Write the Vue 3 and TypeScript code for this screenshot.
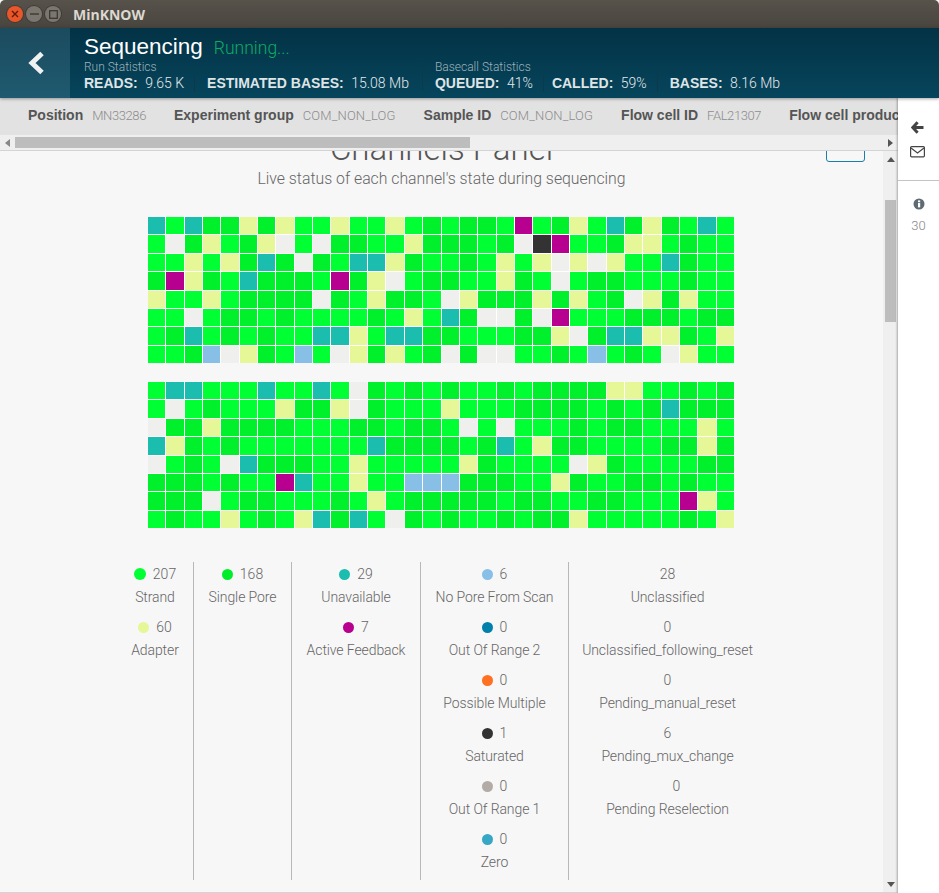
<script setup lang="ts">
const block1: string[] = [
  'TGTDDYDYGGYGGYGDGDDGMGDYGTDYDGTG',
  'GWDYGDYWGWDDGGYDDDGDWKMGGDYYGDGG',
  'GGYGYDTDWDGTTYDGGDGYGYWYWYGGTDGG',
  'DMYDGTDDDGMDYWGDDGGYDGWGDDGGGDGG',
  'YGGYGDDDDWDGYDDGWYDDDYDYGDWYDYGG',
  'GGWGDDGDGGGGDGYGTDWWDWMGGGDDDGDD',
  'GDTGDGDGGTTYGTTDDGGGDDYWDTTYYDGY',
  'GGDBWYDGBGWYDYGDWDWWGGDGBGDGWYGG',
]
const block2: string[] = [
  'GTTGGGTGGTGWDGDGDGGDGDDDDYYGGDGD',
  'GWGDGGGYDDYWDGGGYGGGDDDDGDGDTDDD',
  'WDDYDDDDGGGDDGDDGWGWGGGDGDDGGGYG',
  'TYDGDGGGGGGGTDDDDGDTGYDDGGGGDDYD',
  'WGDGWTDDDGGYGGGGGYDGGGGWYDGGGGDD',
  'DDDGDGGMTGGYGGBBBDDDGGYDGGDDGDGG',
  'DDDWGDDGGGDGYGDDDDDGDDGGDDGGGMYG',
  'GDGGYGDGYTDTGWDGDGGDGDDYGGGGGDGY',
]
const blocks = [block1, block2].map(rows => rows.flatMap(r => r.split('')))

interface Stat { dot?: string; n: string; label: string; shift?: boolean }
const columns: Stat[][] = [
  [
    { dot: '#00ff33', n: '207', label: 'Strand' },
    { dot: '#e5f796', n: '60', label: 'Adapter' },
  ],
  [{ dot: '#00ee2a', n: '168', label: 'Single Pore' }],
  [
    { dot: '#1bbdaf', n: '29', label: 'Unavailable' },
    { dot: '#b80090', n: '7', label: 'Active Feedback' },
  ],
  [
    { dot: '#88bfe6', n: '6', label: 'No Pore From Scan' },
    { dot: '#0080ab', n: '0', label: 'Out Of Range 2' },
    { dot: '#ff7020', n: '0', label: 'Possible Multiple' },
    { dot: '#333333', n: '1', label: 'Saturated' },
    { dot: '#b3aca6', n: '0', label: 'Out Of Range 1' },
    { dot: '#36a7c4', n: '0', label: 'Zero' },
  ],
  [
    { n: '28', label: 'Unclassified' },
    { n: '0', label: 'Unclassified_following_reset' },
    { n: '0', label: 'Pending_manual_reset' },
    { n: '6', label: 'Pending_mux_change' },
    { n: '0', label: 'Pending Reselection', shift: true },
  ],
]
</script>

<template>
  <div class="window">
    <div class="titlebar">
      <span class="wbtn close"><svg width="8" height="8" viewBox="0 0 8 8"><path d="M1 1 L7 7 M7 1 L1 7" stroke="#5e1c08" stroke-width="1.4"/></svg></span>
      <span class="wbtn"><svg width="9" height="8" viewBox="0 0 9 8"><path d="M0 4 H9" stroke="#3b3934" stroke-width="1.4"/></svg></span>
      <span class="wbtn"><svg width="9" height="9" viewBox="0 0 9 9"><rect x=".7" y=".7" width="7.6" height="7.6" fill="none" stroke="#3b3934" stroke-width="1.3"/></svg></span>
      <span class="wtitle">MinKNOW</span>
    </div>
    <header class="header">
      <div class="back">
        <svg width="22" height="26" viewBox="0 0 22 26"><path d="M18 3.5 L8 13 L18 22.5" fill="none" stroke="#f0f2f2" stroke-width="5"/></svg>
      </div>
      <div class="head-main">
        <div class="head-title"><span class="seq">Sequencing</span><span class="running">Running...</span></div>
        <div class="head-stats">
          <div class="group">
            <div class="group-name">Run Statistics</div>
            <div class="group-row">
              <span class="hs"><b>READS:</b>9.65 K</span>
              <i class="sep"></i>
              <span class="hs"><b>ESTIMATED BASES:</b>15.08 Mb</span>
            </div>
          </div>
          <i class="sep tall"></i>
          <div class="group">
            <div class="group-name">Basecall Statistics</div>
            <div class="group-row">
              <span class="hs"><b>QUEUED:</b>41%</span>
              <i class="sep narrow"></i>
              <span class="hs"><b>CALLED:</b>59%</span>
              <i class="sep"></i>
              <span class="hs"><b>BASES:</b>8.16 Mb</span>
            </div>
          </div>
        </div>
      </div>
    </header>
    <div class="body">
      <div class="left">
        <div class="infobar">
          <span class="inf tight"><b>Position</b>MN33286</span>
          <span class="inf wide"><b>Experiment group</b>COM_NON_LOG</span>
          <span class="inf wide"><b>Sample ID</b>COM_NON_LOG</span>
          <span class="inf tight"><b>Flow cell ID</b>FAL21307</span>
          <span class="inf"><b>Flow cell product</b></span>
        </div>
        <div class="hscroll">
          <span class="arr al"></span>
          <div class="htrack"><div class="hthumb"></div></div>
          <span class="arr ar"></span>
        </div>
        <div class="mainwrap">
          <main class="main">
            <div class="panel-head">
              <h1>Channels Panel</h1>
              <span class="outline-btn"></span>
            </div>
            <p class="sub">Live status of each channel's state during sequencing</p>
            <div class="grid" v-for="(cells, b) in blocks" :key="b">
              <i v-for="(c, idx) in cells" :key="idx" :class="['cell', c]"></i>
            </div>
            <div class="legend">
              <div class="lcol" v-for="(col, ci) in columns" :key="ci">
                <div class="stat" v-for="s in col" :key="s.label">
                  <div :class="['num', { shifted: s.shift }]"><i v-if="s.dot" class="dot" :style="{ background: s.dot }"></i>{{ s.n }}</div>
                  <div class="lab">{{ s.label }}</div>
                </div>
              </div>
            </div>
          </main>
          <div class="vscroll">
            <span class="arr au"></span>
            <div class="vtrack"><div class="vthumb"></div></div>
            <span class="arr ad"></span>
          </div>
        </div>
      </div>
      <aside class="side">
        <div class="side-top">
          <svg width="13" height="13" viewBox="0 0 13 13"><path d="M6.6 1.3 L1.8 6.5 L6.6 11.7 M2.5 6.5 H12.5" fill="none" stroke="#444" stroke-width="2.9"/></svg>
          <svg width="15" height="12" viewBox="0 0 15 12"><rect x=".6" y=".6" width="13.8" height="10.2" rx="1" fill="none" stroke="#444" stroke-width="1.2"/><path d="M1 2 L7.5 7 L14 2" fill="none" stroke="#444" stroke-width="1.2"/></svg>
        </div>
        <div class="side-bottom">
          <svg width="12" height="12" viewBox="0 0 12 12"><circle cx="6" cy="6" r="5.5" fill="#5f6b72"/><rect x="5" y="5" width="2.2" height="4.4" fill="#fff"/><rect x="5" y="2.4" width="2.2" height="1.8" fill="#fff"/></svg>
          <span class="count">30</span>
        </div>
      </aside>
    </div>
  </div>
</template>

<style>
html, body { margin: 0; background: #f7f7f7; }
</style>

<style scoped>
.window { width: 939px; height: 893px; display: flex; flex-direction: column; overflow: hidden; font-family: "Roboto", "Liberation Sans", sans-serif; background: #f7f7f7; }
.titlebar { height: 28px; flex: none; display: flex; align-items: center; padding-left: 7px; gap: 3px; background: linear-gradient(#57534b, #48453f); box-sizing: border-box; border-radius: 5px 5px 0 0; }
.wbtn { width: 16px; height: 16px; border-radius: 50%; background: #7b776f; box-shadow: 0 0 0 1px #3f3c37; display: flex; align-items: center; justify-content: center; }
.wbtn.close { background: #e9562a; }
.wtitle { margin-left: 9px; color: #dcd8d0; font: bold 14px "Open Sans", sans-serif; }
.header { height: 70px; flex: none; display: flex; background: linear-gradient(#033245, #06455c); color: #fff; position: relative; z-index: 3; box-shadow: 0 1px 3px rgba(0,0,0,.35); }
.back { width: 70px; display: flex; align-items: center; justify-content: center; background: linear-gradient(#1c4b5e, #1f5a70); }
.head-main { padding: 6px 0 0 14px; }
.head-title { display: flex; align-items: baseline; height: 25px; }
.seq { font: 300 22.5px "Liberation Sans", sans-serif; color: #fff; }
.running { font-size: 17.5px; font-weight: 300; color: #0cad63; margin-left: 11px; }
.head-stats { display: flex; }
.group-name { font-size: 12px; font-weight: 300; color: #9fb3bb; line-height: 14px; margin-top: 1px; }
.group-row { display: flex; align-items: center; height: 19px; margin-top: -1px; }
.hs { font-size: 14px; font-weight: 300; color: #e4e8ea; white-space: nowrap; }
.hs b { font-family: "Liberation Sans", sans-serif; font-weight: 700; margin-right: 7.5px; color: #dfe4e6; }
.sep { width: 1px; height: 18px; background: #0c3a4c; margin: 0 12px 0 10px; }
.sep.narrow { margin: 0 8px 0 10px; }
.sep.tall { align-self: flex-end; height: 31px; margin: 0 12px 2px 13px; }
.body { flex: 1; min-height: 0; display: flex; }
.left { flex: 1; min-width: 0; display: flex; flex-direction: column; }
.infobar { height: 37px; flex: none; box-sizing: border-box; padding: 0 0 4px 28px; display: flex; align-items: center; gap: 28px; overflow: hidden; background: #e2e2e2; white-space: nowrap; }
.inf { font-size: 13px; font-weight: 300; color: #8d8d8d; }
.inf.tight { letter-spacing: -.4px; }
.inf.wide { letter-spacing: .15px; }
.inf b { font-family: "Liberation Sans", sans-serif; font-size: 14px; font-weight: 700; color: #555; margin-right: 9px; letter-spacing: 0; }
.hscroll { height: 16px; flex: none; display: flex; align-items: center; background: #efefef; border-bottom: 1px solid #d4d4d4; box-sizing: border-box; }
.htrack { flex: 1; height: 11px; margin: 0 3px 0 5px; }
.hthumb { width: 455px; height: 11px; background: #bdbdbd; }
.arr { width: 0; height: 0; flex: none; border: 4px solid transparent; }
.al { border-right: 5px solid #888; border-left-width: 0; margin-left: 5px; }
.ar { border-left: 5px solid #555; border-right-width: 0; margin-right: 5px; }
.au { border-bottom: 5px solid #555; border-top-width: 0; margin-top: 6px; }
.ad { border-top: 5px solid #555; border-bottom-width: 0; margin-bottom: 5px; }
.mainwrap { flex: 1; min-height: 0; display: flex; border-bottom: 1px solid #d4d4d4; }
.main { flex: 1; min-width: 0; overflow: hidden; background: #f7f7f7; }
.vscroll { width: 15px; flex: none; display: flex; flex-direction: column; align-items: center; background: #efefef; }
.vtrack { flex: 1; width: 11px; padding-top: 38px; }
.vthumb { height: 122px; background: #bdbdbd; }
.panel-head { height: 36px; margin-top: -20px; position: relative; text-align: center; }
h1 { margin: 0; font-size: 33px; font-weight: 300; color: #555; line-height: 36px; }
.outline-btn { position: absolute; left: 826px; top: 0; width: 39px; height: 31px; border: 1px solid #1a7fa8; border-radius: 3px; box-sizing: border-box; }
.sub { margin: 2px 0 0; height: 20px; text-align: center; font-size: 15.8px; font-weight: 300; color: #666; line-height: 20px; }
.grid { width: 586px; height: 146px; margin: 28px 0 0 148px; background: #fff; display: grid; grid-template-columns: repeat(32, 1fr); grid-template-rows: repeat(8, 1fr); gap: 1px; }
.grid + .grid { margin-top: 19px; }
.cell.G { background: #00ff33; }
.cell.D { background: #00f02c; }
.cell.T { background: #1bbdaf; }
.cell.Y { background: #e5f796; }
.cell.W { background: #efefed; }
.cell.M { background: #b80090; }
.cell.B { background: #88bfe6; }
.cell.K { background: #333333; }
.legend { display: grid; grid-template-columns: 76px 98px 129px 148px 198px; margin: 34px 0 0 117px; }
.lcol { border-left: 1px solid #b8b8b8; height: 318px; box-sizing: border-box; }
.lcol:first-child { border-left: 0; }
.stat { text-align: center; height: 53px; padding-top: 4px; box-sizing: border-box; }
.num { font-size: 14px; font-weight: 300; color: #666; line-height: 16px; display: flex; justify-content: center; align-items: center; }
.num.shifted { padding-left: 18px; }
.dot { width: 11px; height: 11px; border-radius: 50%; margin-right: 7px; }
.lcol:first-child .stat:first-child .dot { width: 12px; height: 12px; }
.lab { font-size: 14px; font-weight: 300; letter-spacing: -.1px; color: #666; line-height: 18px; margin-top: 6px; white-space: nowrap; }
.side { width: 41px; flex: none; background: #fff; position: relative; z-index: 2; box-shadow: -1px 0 2px rgba(0,0,0,.3); display: flex; flex-direction: column; }
.side-top { height: 83px; box-sizing: border-box; border-bottom: 1px solid #c4c4c4; display: flex; flex-direction: column; align-items: center; padding: 23px 2px 0 0; gap: 12px; }
.side-bottom { display: flex; flex-direction: column; align-items: center; padding-top: 17px; gap: 8px; }
.count { font-size: 13px; font-weight: 300; color: #888; }
</style>
